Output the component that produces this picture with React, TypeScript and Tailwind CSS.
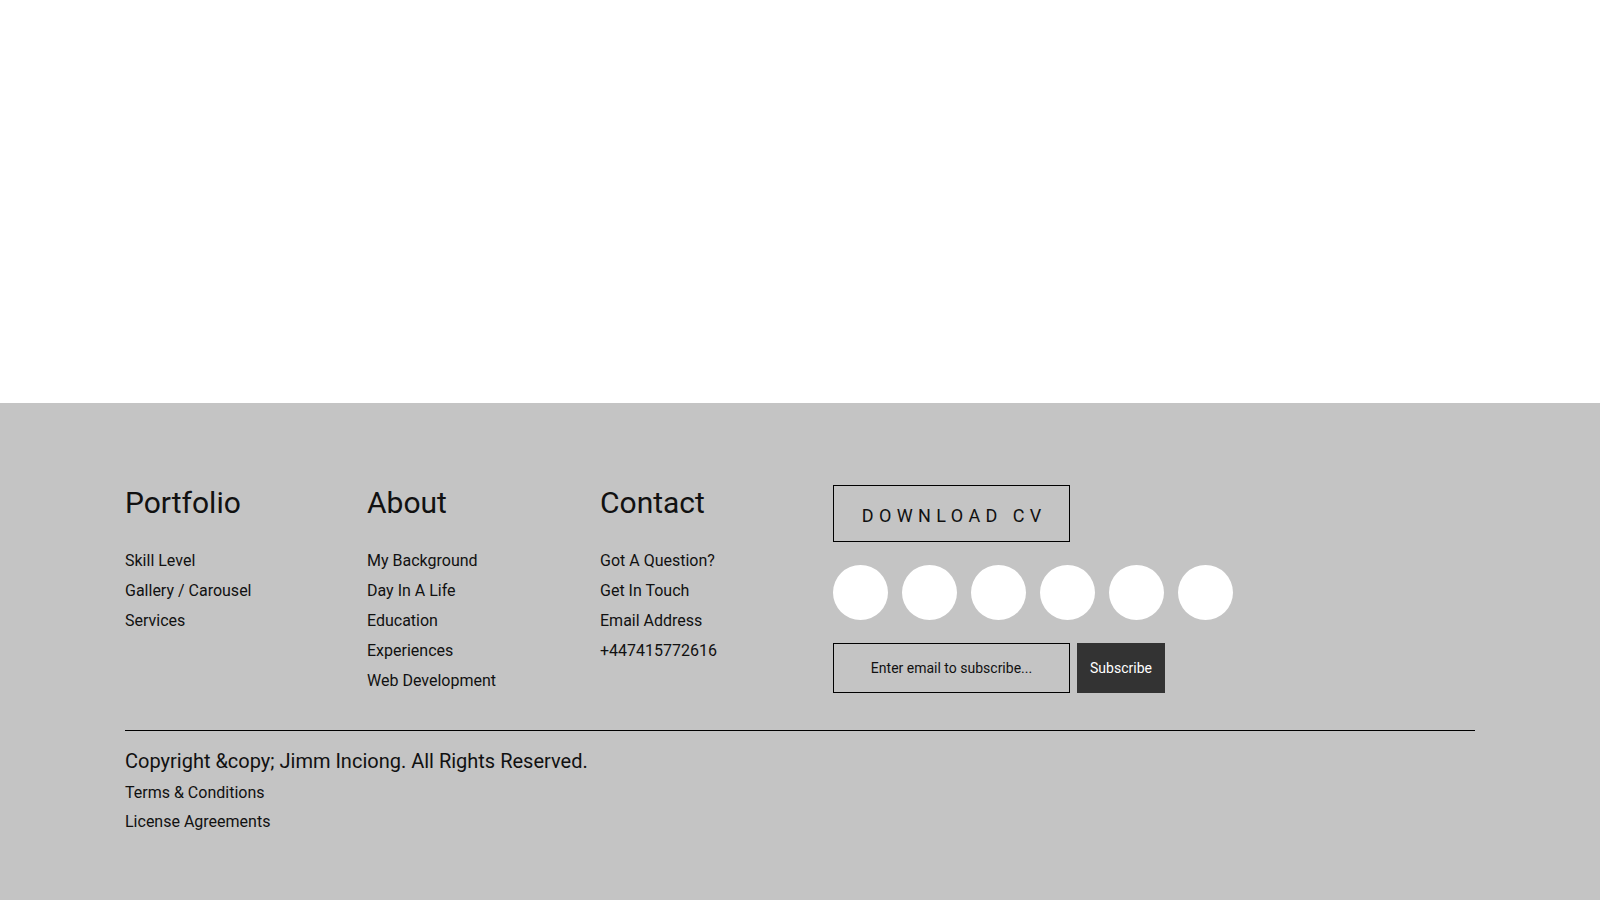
import React from "react";

const columns = [
  { title: "Portfolio", width: "w-[242px]", links: ["Skill Level", "Gallery / Carousel", "Services"] },
  {
    title: "About",
    width: "w-[233px]",
    links: ["My Background", "Day In A Life", "Education", "Experiences", "Web Development"],
  },
  {
    title: "Contact",
    width: "w-[233px]",
    links: ["Got A Question?", "Get In Touch", "Email Address", "+447415772616"],
  },
];

export default function App() {
  return (
    <div className="min-h-screen flex flex-col bg-white text-[#111] font-['Roboto',sans-serif]">
      {/* Empty hero area */}
      <div className="h-[403px] bg-white" />

      {/* Footer */}
      <footer className="flex-1 bg-[#c4c4c4] px-[125px] pt-[82px] pb-[64px]">
        <div className="flex">
          {columns.map((col) => (
            <div key={col.title} className={col.width}>
              <h3 className="text-[30px] leading-[36px] font-normal">{col.title}</h3>
              <ul className="mt-[25px]">
                {col.links.map((l) => (
                  <li key={l} className="text-[16px] leading-[30px]">
                    <a href="#">{l}</a>
                  </li>
                ))}
              </ul>
            </div>
          ))}

          {/* CV, socials, subscribe */}
          <div className="flex flex-col gap-[23px]">
            <button className="w-[237px] h-[57px] border border-black text-[18px] tracking-[0.3em] pl-[0.3em] pt-[4px] uppercase">
              Download CV
            </button>
            <div className="flex gap-[14px]">
              {[0, 1, 2, 3, 4, 5].map((i) => (
                <span key={i} className="w-[55px] h-[55px] rounded-full bg-white" />
              ))}
            </div>
            <form className="flex gap-[7px]" onSubmit={(e) => e.preventDefault()}>
              <input
                type="email"
                placeholder="Enter email to subscribe..."
                className="w-[237px] h-[50px] border border-black bg-transparent text-center text-[14px] placeholder:text-[#111] outline-none"
              />
              <button type="submit" className="w-[88px] h-[50px] bg-[#333] text-white text-[14px]">
                Subscribe
              </button>
            </form>
          </div>
        </div>

        <div className="mt-[34px] border-t border-black" />

        <div className="mt-[16px]">
          <p className="text-[20px] leading-[28px]">Copyright &amp;copy; Jimm Inciong. All Rights Reserved.</p>
          <ul className="mt-[3px]">
            <li className="text-[16px] leading-[29px]">
              <a href="#">Terms &amp; Conditions</a>
            </li>
            <li className="text-[16px] leading-[29px]">
              <a href="#">License Agreements</a>
            </li>
          </ul>
        </div>
      </footer>
    </div>
  );
}
